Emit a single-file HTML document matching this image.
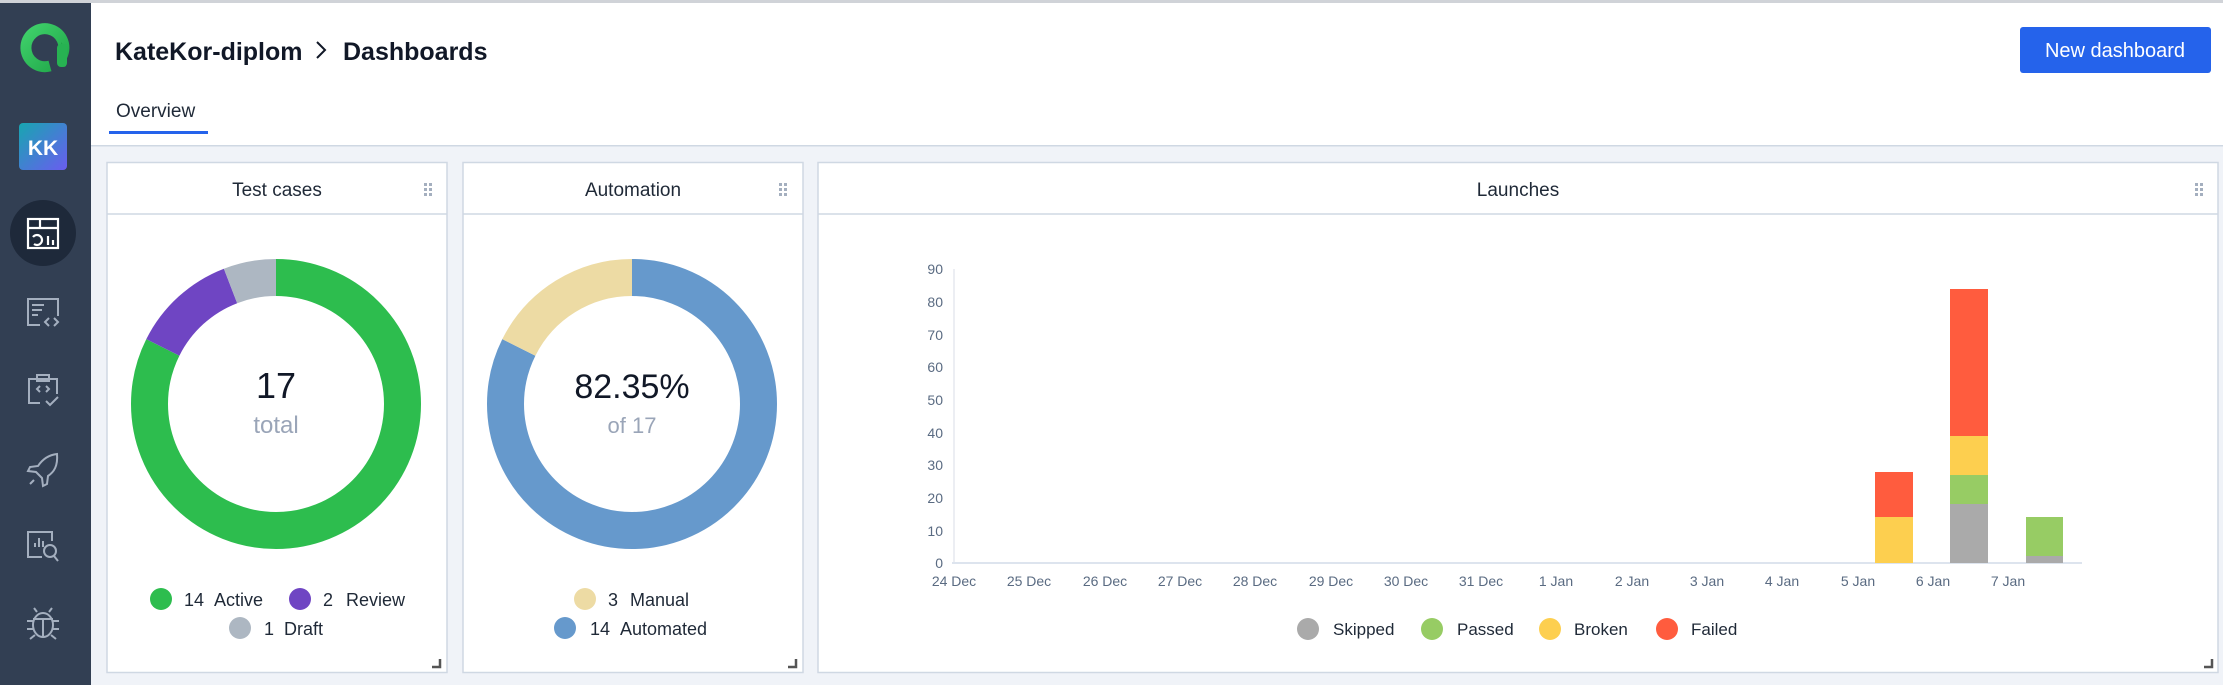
<!DOCTYPE html>
<html><head><meta charset="utf-8"><style>
html,body{margin:0;padding:0;width:2223px;height:685px;overflow:hidden;background:#fff;font-family:"Liberation Sans",sans-serif}
svg text{font-family:"Liberation Sans",sans-serif}
</style></head><body>
<svg width="2223" height="685" viewBox="0 0 2223 685" xmlns="http://www.w3.org/2000/svg">
<rect width="2223" height="685" fill="#fff"/>
<rect x="0" y="0" width="2223" height="3" fill="#d0d3d8"/>
<!-- sidebar -->
<rect x="0" y="3" width="91" height="682" fill="#323f53"/>
<!-- logo -->
<defs><linearGradient id="lg" x1="0" y1="0" x2="1" y2="1"><stop offset="0" stop-color="#3fd06a"/><stop offset="1" stop-color="#21a84a"/></linearGradient>
<linearGradient id="kk" x1="0" y1="0" x2="1" y2="1"><stop offset="0" stop-color="#17a6b0"/><stop offset="1" stop-color="#6a5cf0"/></linearGradient></defs>
<path d="M62 56 A19 19 0 1 0 50 66" fill="none" stroke="url(#lg)" stroke-width="11"/>
<path d="M61 42 V64 a3 3 0 0 0 5 2 V48 Z" fill="#21a84a"/>
<rect x="57" y="44" width="10" height="23" rx="4" fill="#27b252"/>
<!-- KK -->
<rect x="19" y="123" width="48" height="47" rx="4" fill="url(#kk)"/>
<text x="43" y="155" font-size="21" font-weight="bold" fill="#fff" text-anchor="middle">KK</text>
<!-- active -->
<circle cx="43" cy="233" r="33" fill="#1e293a"/>
<g fill="none" stroke="#fff" stroke-width="2.2">
<rect x="28" y="219" width="30" height="29"/><line x1="28" y1="228" x2="58" y2="228"/><line x1="40" y1="219" x2="40" y2="228"/>
<path d="M33 237 a5 5 0 1 1 1 7"/><line x1="48" y1="236" x2="48" y2="245"/><line x1="53" y1="240" x2="53" y2="245"/>
</g>
<g fill="none" stroke="#a4afbf" stroke-width="2">
<path d="M40 325 H28 V299 H58 V316"/><line x1="32" y1="305" x2="44" y2="305"/><line x1="32" y1="310" x2="42" y2="310"/><line x1="32" y1="315" x2="38" y2="315"/>
<path d="M49 318 l-4 4 4 4 M54 318 l4 4 -4 4"/>
<path d="M40 403 H29 V379 H57 V394"/><rect x="37" y="375" width="12" height="6"/>
<path d="M40 386 l-3 3 3 3 M46 386 l3 3 -3 3"/><path d="M46 401 l4 4 8 -8"/>
<path d="M57 454 C48 455 42 460 38 466 L30 467 L28 471 L36 472 L42 478 L43 486 L47 484 L48 476 C54 472 58 466 57 454 Z"/>
<line x1="34" y1="480" x2="30" y2="484"/>
<path d="M42 557 H28 V532 H52 V541"/><line x1="35" y1="543" x2="35" y2="547"/><line x1="39" y1="538" x2="39" y2="547"/><line x1="43" y1="541" x2="43" y2="547"/>
<circle cx="50" cy="551" r="6"/><line x1="54" y1="556" x2="58" y2="561"/>
<ellipse cx="43" cy="625" rx="10" ry="12"/><line x1="33" y1="619" x2="53" y2="619"/><line x1="43" y1="619" x2="43" y2="637"/>
<path d="M37 612 l-3 -4 M49 612 l3 -4 M33 621 H27 M53 621 H59 M33 629 H27 M53 629 H59 M35 635 l-5 4 M51 635 l5 4"/>
</g>
<!-- header -->
<text x="115" y="60" font-size="25" font-weight="bold" fill="#111827">KateKor-diplom</text>
<path d="M317 42 l8 8 -8 8" fill="none" stroke="#111827" stroke-width="2"/>
<text x="343" y="60" font-size="25" font-weight="bold" fill="#111827">Dashboards</text>
<rect x="2020" y="27" width="191" height="46" rx="3" fill="#2563eb"/>
<text x="2115" y="57" font-size="20" fill="#fff" text-anchor="middle">New dashboard</text>
<text x="116" y="117" font-size="19" fill="#1f2937">Overview</text>
<rect x="109" y="131" width="99" height="3" fill="#2563eb"/>
<rect x="91" y="146" width="2132" height="539" fill="#f0f3f8"/>
<rect x="91" y="145" width="2132" height="1.5" fill="#cfd8e3"/>
<!-- cards -->
<g fill="#fff" stroke="#cfd8e3" stroke-width="1.5">
<rect x="107" y="162.5" width="340" height="510"/>
<rect x="463" y="162.5" width="340" height="510"/>
<rect x="818" y="162.5" width="1400" height="510"/>
</g>
<g stroke="#cfd8e3" stroke-width="1.5">
<line x1="107" y1="214" x2="447" y2="214"/><line x1="463" y1="214" x2="803" y2="214"/><line x1="818" y1="214" x2="2218" y2="214"/>
</g>
<text x="277" y="196" font-size="19" fill="#1f2937" text-anchor="middle">Test cases</text>
<text x="633" y="196" font-size="19" fill="#1f2937" text-anchor="middle">Automation</text>
<text x="1518" y="196" font-size="19" fill="#1f2937" text-anchor="middle">Launches</text>
<g fill="#a4afbf">
<rect x="424" y="183" width="3" height="3"/><rect x="429" y="183" width="3" height="3"/><rect x="424" y="188" width="3" height="3"/><rect x="429" y="188" width="3" height="3"/><rect x="424" y="193" width="3" height="3"/><rect x="429" y="193" width="3" height="3"/>
<rect x="779" y="183" width="3" height="3"/><rect x="784" y="183" width="3" height="3"/><rect x="779" y="188" width="3" height="3"/><rect x="784" y="188" width="3" height="3"/><rect x="779" y="193" width="3" height="3"/><rect x="784" y="193" width="3" height="3"/>
<rect x="2195" y="183" width="3" height="3"/><rect x="2200" y="183" width="3" height="3"/><rect x="2195" y="188" width="3" height="3"/><rect x="2200" y="188" width="3" height="3"/><rect x="2195" y="193" width="3" height="3"/><rect x="2200" y="193" width="3" height="3"/>
</g>
<g fill="none" stroke="#555" stroke-width="2.5">
<path d="M432 667 H440 V659"/><path d="M788 667 H796 V659"/><path d="M2204 667 H2212 V659"/>
</g>
<!-- donut 1 -->
<g transform="rotate(-90 276 404)" fill="none" stroke-width="37">
<circle cx="276" cy="404" r="126.5" stroke="#2dbd4e" stroke-dasharray="654.5 800"/>
<circle cx="276" cy="404" r="126.5" stroke="#6f45c3" stroke-dasharray="0 654.5 93.5 800"/>
<circle cx="276" cy="404" r="126.5" stroke="#adb7c2" stroke-dasharray="0 748 47 800"/>
</g>
<text x="276" y="398" font-size="36" fill="#111827" text-anchor="middle">17</text>
<text x="276" y="433" font-size="24" fill="#9aa5b8" text-anchor="middle">total</text>
<g font-size="18" fill="#1f2937">
<circle cx="161" cy="599" r="11" fill="#2dbd4e"/><text x="184" y="606">14</text><text x="214" y="606">Active</text>
<circle cx="300" cy="599" r="11" fill="#6f45c3"/><text x="323" y="606">2</text><text x="346" y="606">Review</text>
<circle cx="240" cy="628" r="11" fill="#adb7c2"/><text x="264" y="635">1</text><text x="284" y="635">Draft</text>
</g>
<!-- donut 2 -->
<g transform="rotate(-90 632 404)" fill="none" stroke-width="37">
<circle cx="632" cy="404" r="126.5" stroke="#6699cc" stroke-dasharray="654.5 800"/>
<circle cx="632" cy="404" r="126.5" stroke="#eddba4" stroke-dasharray="0 654.5 141 800"/>
</g>
<text x="632" y="398" font-size="34" fill="#111827" text-anchor="middle">82.35%</text>
<text x="632" y="433" font-size="22" fill="#9aa5b8" text-anchor="middle">of 17</text>
<g font-size="18" fill="#1f2937">
<circle cx="585" cy="599" r="11" fill="#eddba4"/><text x="608" y="606">3</text><text x="630" y="606">Manual</text>
<circle cx="565" cy="628" r="11" fill="#6699cc"/><text x="590" y="635">14</text><text x="620" y="635">Automated</text>
</g>
<!-- chart -->
<line x1="954" y1="269" x2="954" y2="563" stroke="#e5e9ef" stroke-width="1.5"/>
<line x1="952" y1="563" x2="2082" y2="563" stroke="#dde4ee" stroke-width="2"/>
<g font-size="14" fill="#5a6b82" text-anchor="end">
<text x="943" y="274">90</text><text x="943" y="307">80</text><text x="943" y="340">70</text><text x="943" y="372">60</text><text x="943" y="405">50</text><text x="943" y="438">40</text><text x="943" y="470">30</text><text x="943" y="503">20</text><text x="943" y="536">10</text><text x="943" y="568">0</text>
</g>
<g font-size="14" fill="#5a6b82" text-anchor="middle">
<text x="954" y="586">24 Dec</text><text x="1029" y="586">25 Dec</text><text x="1105" y="586">26 Dec</text><text x="1180" y="586">27 Dec</text><text x="1255" y="586">28 Dec</text><text x="1331" y="586">29 Dec</text><text x="1406" y="586">30 Dec</text><text x="1481" y="586">31 Dec</text><text x="1556" y="586">1 Jan</text><text x="1632" y="586">2 Jan</text><text x="1707" y="586">3 Jan</text><text x="1782" y="586">4 Jan</text><text x="1858" y="586">5 Jan</text><text x="1933" y="586">6 Jan</text><text x="2008" y="586">7 Jan</text>
</g>
<rect x="1875" y="517" width="38" height="46" fill="#fdcf4f"/>
<rect x="1875" y="472" width="38" height="45" fill="#ff5c3e"/>
<rect x="1950" y="504" width="38" height="59" fill="#aaaaaa"/>
<rect x="1950" y="475" width="38" height="29" fill="#97cc64"/>
<rect x="1950" y="436" width="38" height="39" fill="#fdcf4f"/>
<rect x="1950" y="289" width="38" height="147" fill="#ff5c3e"/>
<rect x="2026" y="556" width="37" height="7" fill="#aaaaaa"/>
<rect x="2026" y="517" width="37" height="39" fill="#97cc64"/>
<g font-size="17" fill="#1f2937">
<circle cx="1308" cy="629" r="11" fill="#aaaaaa"/><text x="1333" y="635">Skipped</text>
<circle cx="1432" cy="629" r="11" fill="#97cc64"/><text x="1457" y="635">Passed</text>
<circle cx="1550" cy="629" r="11" fill="#fdcf4f"/><text x="1574" y="635">Broken</text>
<circle cx="1667" cy="629" r="11" fill="#ff5c3e"/><text x="1691" y="635">Failed</text>
</g>
</svg>
</body></html>
